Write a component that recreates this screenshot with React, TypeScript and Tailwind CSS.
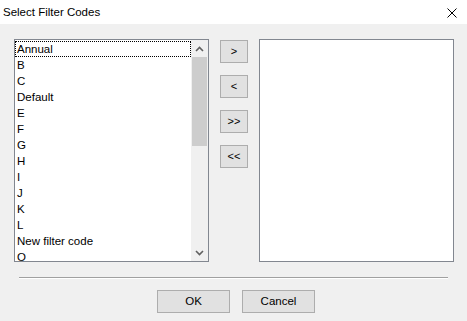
import React from 'react'

const codes = ['Annual', 'B', 'C', 'Default', 'E', 'F', 'G', 'H', 'I', 'J', 'K', 'L', 'New filter code', 'O']

function Chevron({ up }: { up?: boolean }) {
  return (
    <svg width="9" height="6" viewBox="0 0 9 6" className="block">
      <path d={up ? 'M1 5 L4.5 1.5 L8 5' : 'M1 1 L4.5 4.5 L8 1'} fill="none" stroke="#606060" strokeWidth="1.6" />
    </svg>
  )
}

function MoveButton({ label }: { label: string }) {
  return (
    <button className="w-[28px] h-[23px] bg-[#e1e1e1] border border-[#adadad] text-[11px] text-black flex items-center justify-center leading-none">
      {label}
    </button>
  )
}

export default function App() {
  return (
    <div className="w-[467px] h-[321px] bg-[#f0f0f0] flex flex-col overflow-hidden text-[11.5px] text-black" style={{ fontFamily: '"Liberation Sans", Arial, sans-serif' }}>
      <div className="h-[24px] bg-white flex items-center justify-between pl-[3px] pr-[10px] shrink-0">
        <span className="text-[11.5px] pt-[1px]">Select Filter Codes</span>
        <svg width="10" height="10" viewBox="0 0 10 10" className="block mt-[1px]">
          <path d="M0.5 0.5 L9.5 9.5 M9.5 0.5 L0.5 9.5" stroke="#000" strokeWidth="1" />
        </svg>
      </div>

      <div className="flex mt-[15px] ml-[14px] h-[223px]">
        {/* source list */}
        <div className="w-[195px] h-full border border-[#828790] bg-white flex">
          <div className="flex-1 overflow-hidden pt-[1px]">
            {codes.map((c, i) => (
              <div
                key={c}
                className={`h-[16px] leading-[16px] pl-[2px] whitespace-nowrap ${i === 0 ? 'outline outline-1 outline-dotted outline-black -outline-offset-1' : ''}`}
              >
                {c}
              </div>
            ))}
          </div>
          <div className="w-[17px] h-full bg-[#f0f0f0] flex flex-col">
            <div className="h-[17px] flex items-center justify-center">
              <Chevron up />
            </div>
            <div className="mx-[1px] h-[89px] bg-[#cdcdcd]" />
            <div className="flex-1" />
            <div className="h-[17px] flex items-center justify-center">
              <Chevron />
            </div>
          </div>
        </div>

        <div className="w-[28px] ml-[11px] pt-[1px] flex flex-col gap-[12px]">
          <MoveButton label=">" />
          <MoveButton label="<" />
          <MoveButton label=">>" />
          <MoveButton label="<<" />
        </div>

        {/* target list */}
        <div className="w-[195px] h-full ml-[11px] border border-[#828790] bg-white" />
      </div>

      <div className="ml-[19px] mt-[15px] w-[429px] h-[2px] border-t border-[#a0a0a0] border-b border-b-white" />

      <div className="flex ml-[157px] mt-[11px] gap-[12px]">
        <button className="w-[73px] h-[23px] bg-[#e1e1e1] border border-[#adadad] text-[11.5px]">OK</button>
        <button className="w-[73px] h-[23px] bg-[#e1e1e1] border border-[#adadad] text-[11.5px]">Cancel</button>
      </div>
    </div>
  )
}
